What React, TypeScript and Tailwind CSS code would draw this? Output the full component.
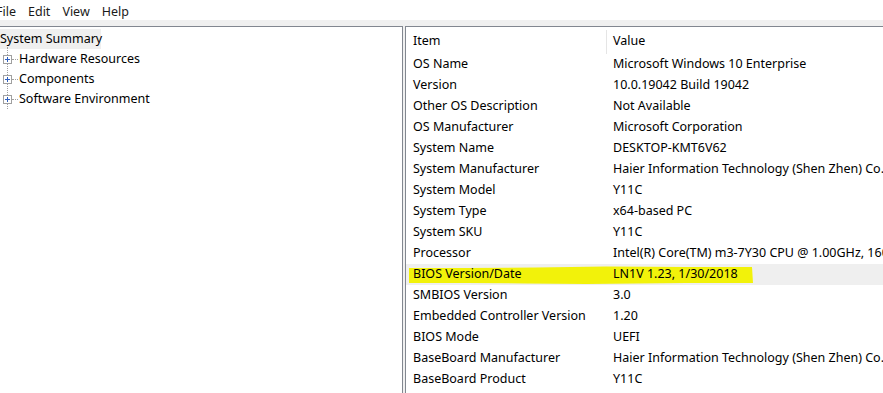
import React from "react";

const rows: [string, string][] = [
  ["OS Name", "Microsoft Windows 10 Enterprise"],
  ["Version", "10.0.19042 Build 19042"],
  ["Other OS Description", "Not Available"],
  ["OS Manufacturer", "Microsoft Corporation"],
  ["System Name", "DESKTOP-KMT6V62"],
  ["System Manufacturer", "Haier Information Technology (Shen Zhen) Co., Ltd"],
  ["System Model", "Y11C"],
  ["System Type", "x64-based PC"],
  ["System SKU", "Y11C"],
  ["Processor", "Intel(R) Core(TM) m3-7Y30 CPU @ 1.00GHz, 1601 Mhz, 2 Core(s), 4 Logical Processor(s)"],
  ["BIOS Version/Date", "LN1V 1.23, 1/30/2018"],
  ["SMBIOS Version", "3.0"],
  ["Embedded Controller Version", "1.20"],
  ["BIOS Mode", "UEFI"],
  ["BaseBoard Manufacturer", "Haier Information Technology (Shen Zhen) Co., Ltd"],
  ["BaseBoard Product", "Y11C"],
];

function PlusBox() {
  return (
    <svg width="9" height="9" viewBox="0 0 9 9" className="block">
      <rect x="0.5" y="0.5" width="8" height="8" fill="white" stroke="#a0a0a0" />
      <path d="M2 4.5h5M4.5 2v5" stroke="#3060c0" strokeWidth="1" />
    </svg>
  );
}

export default function App() {
  const font = { fontFamily: '"Noto Sans", "Segoe UI", sans-serif' };
  return (
    <div className="w-[883px] h-[393px] overflow-hidden bg-[#f0f0f0] text-[12.5px] text-[#000]" style={font}>
      <div className="h-[20px] bg-white flex items-center gap-[12px] ml-[-4px] pt-[5px] text-[#1a1a1a]">
        <span>File</span>
        <span>Edit</span>
        <span>View</span>
        <span>Help</span>
      </div>
      <div className="flex mt-[6px] gap-[2px] h-[367px]">
        <div className="w-[403px] shrink-0 bg-white border-t border-r border-[#828790] pt-[2px]">
          <div className="h-[20px] flex items-center">
            <span className="bg-[#efefef] h-[20px] flex items-center whitespace-nowrap w-[101px]">System Summary</span>
          </div>
          <div className="relative">
            <div className="absolute left-[7px] top-[-2px] h-[62px] border-l border-dotted border-[#a0a0a0]" />
            {["Hardware Resources", "Components", "Software Environment"].map((t) => (
              <div key={t} className="h-[20px] flex items-center relative whitespace-nowrap">
                <div className="ml-[3px] z-10"><PlusBox /></div>
                <div className="w-[6px] border-t border-dotted border-[#a0a0a0]" />
                <span className="ml-[1px]">{t}</span>
              </div>
            ))}
          </div>
        </div>
        <div className="flex-1 bg-white border-t border-l border-[#828790] overflow-hidden">
          <div className="h-[27px] flex items-center pt-[2px]">
            <div className="w-[200px] pl-[7px] shrink-0">Item</div>
            <div className="h-[24px] border-l border-[#e5e5e5] pl-[6px] flex items-center">Value</div>
          </div>
          {rows.map(([k, v]) => {
            const hl = k === "BIOS Version/Date";
            return (
              <div key={k} className={`h-[21px] flex items-center whitespace-nowrap relative ${hl ? "bg-[#efefef]" : ""}`}>
                {hl && (
                  <svg className="absolute left-0 top-0" width="360" height="21" viewBox="0 0 360 21">
                    <path d="M3 4 L60 4 L130 3.5 L200 2.5 L280 3 L346 3 L347 19 L280 19 L180 20 L120 19.5 L60 19 L3 19 Z" fill="#f2f20a" />
                  </svg>
                )}
                <div className="w-[200px] pl-[7px] shrink-0 relative">{k}</div>
                <div className="pl-[7px] relative">{v}</div>
              </div>
            );
          })}
        </div>
      </div>
    </div>
  );
}
